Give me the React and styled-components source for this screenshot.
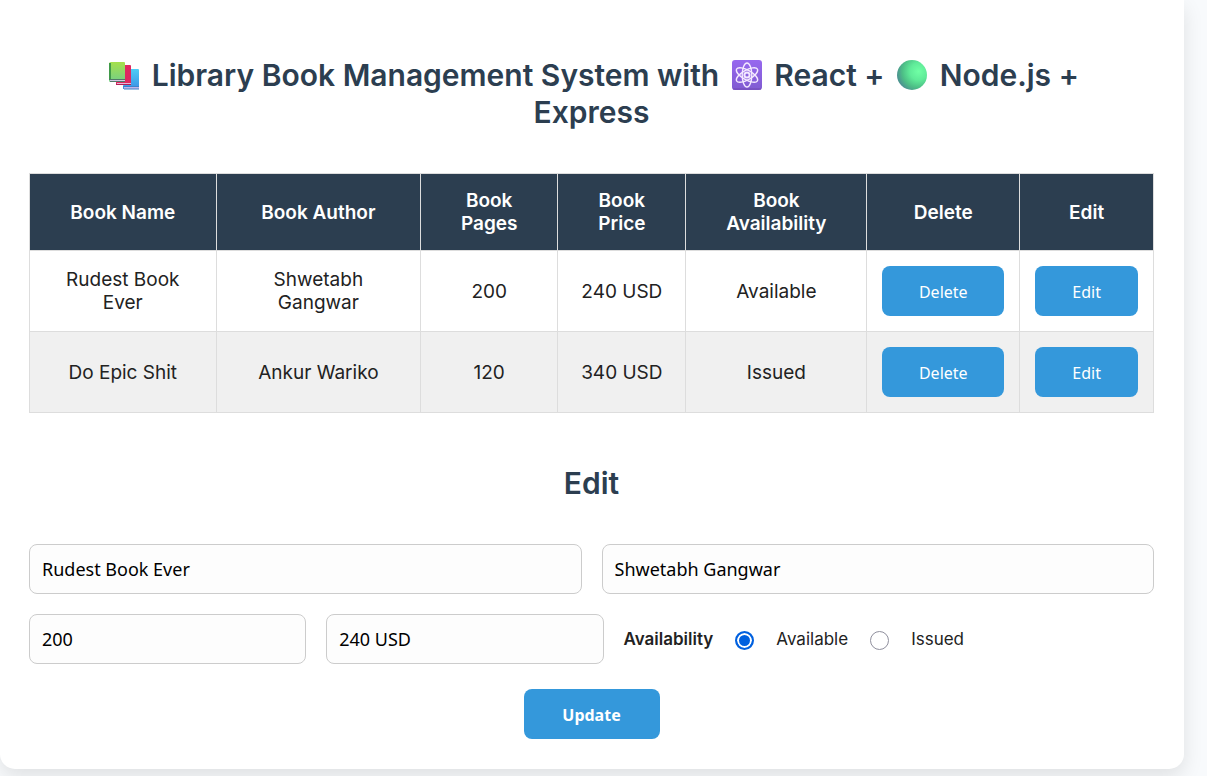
import React, { useState } from "react";
import styled, { createGlobalStyle } from "styled-components";

const GlobalStyle = createGlobalStyle`
  *, *::before, *::after { box-sizing: border-box; }
  body {
    margin: 0;
    background: #f8fafc;
    color: #222;
    font-family: Inter, "Liberation Sans", sans-serif;
    font-size: 17px;
  }
`;

const Card = styled.main`
  margin: 0 23px 7px 0;
  padding: 57px 30px 30px 29px;
  background: #fff;
  border-radius: 0 0 15px 15px;
  box-shadow: 0 8px 20px rgba(0, 0, 0, 0.1);
`;

const Title = styled.h1`
  margin: 0 0 42px;
  padding: 0 60px;
  color: #2c3e50;
  font-size: 30px;
  font-weight: 600;
  line-height: 37px;
  text-align: center;
`;

const SectionTitle = styled(Title).attrs({ as: "h2" })`
  margin-top: 52px;
`;

const Emoji = styled.svg`
  width: 32px;
  height: 32px;
  margin: 0 4px;
  vertical-align: -5px;
`;

const Table = styled.table`
  width: 100%;
  table-layout: fixed;
  border-collapse: collapse;
  font-size: 19px;
  line-height: 23px;
  text-align: center;
`;

const Col = styled.col`
  width: ${(p) => p.$share};
`;

const HeadCell = styled.th`
  padding: 15px 25px;
  border: 1px solid #ddd;
  background: #2c3e50;
  color: #fff;
  font-weight: 600;
`;

const Row = styled.tr`
  &:nth-child(even) { background: #f0f0f0; }
`;

const Cell = styled.td`
  padding: ${(p) => (p.$action ? "15px" : "15px 30px")};
  border: 1px solid #ddd;
`;

const Button = styled.button`
  display: block;
  width: ${(p) => p.$width || "100%"};
  height: 50px;
  margin: ${(p) => p.$margin || "0"};
  padding: 2px 0 0;
  border: 0;
  border-radius: 8px;
  background: #3498db;
  color: #fff;
  font-family: "Noto Sans", "Open Sans", sans-serif;
  font-size: 16px;
  font-weight: ${(p) => (p.$strong ? 700 : 400)};
  cursor: pointer;
`;

const FieldRow = styled.div`
  display: flex;
  align-items: center;
  gap: 20px;
  margin-top: 20px;
`;

const Input = styled.input`
  flex: ${(p) => (p.$small ? "0 0 calc(25% - 4px)" : "1 1 0")};
  min-width: 0;
  height: 50px;
  padding: 0 12px;
  border: 1px solid #ccc;
  border-radius: 8px;
  background: #fdfdfd;
  color: #000;
  font-family: "Noto Sans", "Open Sans", sans-serif;
  font-size: 18px;
`;

const Choices = styled.fieldset`
  display: flex;
  align-items: center;
  gap: 22px;
  min-width: 0;
  margin: 0;
  padding: 0;
  border: 0;
`;

const ChoiceTitle = styled.span`
  font-weight: 600;
`;

const Choice = styled.label`
  display: flex;
  align-items: center;
  gap: 22px;
`;

const Radio = styled.input`
  appearance: none;
  width: 19px;
  height: 19px;
  margin: 3px 0 0;
  border: 1px solid #8f8f9d;
  border-radius: 50%;
  background: #fff;
  &:checked {
    border: 2px solid #0060df;
    background: #0060df;
    box-shadow: inset 0 0 0 2px #fff;
  }
`;

const BooksIcon = () => (
  <Emoji viewBox="0 0 32 32" role="img" aria-label="Books">
    <defs>
      <linearGradient id="green" x1="0" y1="0" x2="0" y2="1">
        <stop stopColor="#a5e04c" />
        <stop offset="1" stopColor="#74cf86" />
      </linearGradient>
      <linearGradient id="blue" x1="0" y1="0" x2="0" y2="1">
        <stop stopColor="#4dcdf5" />
        <stop offset="1" stopColor="#3c91e5" />
      </linearGradient>
    </defs>
    <path d="M17 11q0-1 1-1h12q1 0 1 1v17l-1 2H15v-2z" fill="url(#blue)" />
    <path d="M16 28h15v2H16z" fill="#c2b5e8" />
    <path d="M15 27.5h16M16 30h15" stroke="#3d83cb" />
    <path d="M9 7q0-1 1-1h12q1 0 1 1v17l-1 2H8v-2z" fill="#df2860" />
    <path d="M9 24h14v1H9z" fill="#e4b7d7" />
    <path d="M8 25.5h15" stroke="#b31d55" />
    <path d="M1 5q0-2 2-2h13q1 0 1 1v17l-1 2H2q-1 0-1-2z" fill="url(#green)" />
    <path d="M2 4v17" stroke="#409a49" strokeWidth="2" />
    <path d="M2 21.5h15" stroke="#d1c7e4" strokeWidth="2" />
    <path d="M1 20.5h16M2 22.5h15" stroke="#52796a" />
  </Emoji>
);

const AtomIcon = () => (
  <Emoji viewBox="0 0 32 32" role="img" aria-label="Atom">
    <defs>
      <linearGradient id="violet" x1="0" y1="0" x2="0" y2="1">
        <stop stopColor="#9768ef" />
        <stop offset="1" stopColor="#805bd1" />
      </linearGradient>
    </defs>
    <rect x="1" y="1" width="30" height="30" rx="3" fill="url(#violet)" />
    <path d="M2 30h28" stroke="#7048b4" />
    <g fill="none" stroke="#f4e9ff" strokeWidth="1.4">
      <ellipse cx="16" cy="16" rx="4.8" ry="12" />
      <ellipse cx="16" cy="16" rx="4.8" ry="12" transform="rotate(60 16 16)" />
      <ellipse cx="16" cy="16" rx="4.8" ry="12" transform="rotate(120 16 16)" />
      <circle cx="16" cy="16" r="2.6" strokeWidth="2" />
    </g>
  </Emoji>
);

const CircleIcon = () => (
  <Emoji viewBox="0 0 32 32" role="img" aria-label="Green circle">
    <defs>
      <radialGradient id="ball" cx=".72" cy=".38" r=".72">
        <stop stopColor="#70ffa5" />
        <stop offset=".4" stopColor="#60eb99" />
        <stop offset=".75" stopColor="#4dbf86" />
        <stop offset="1" stopColor="#4c9490" />
      </radialGradient>
    </defs>
    <circle cx="16" cy="16" r="15" fill="url(#ball)" />
  </Emoji>
);

const columns = [
  ["Book Name", "16.6%"],
  ["Book Author", "18.2%"],
  ["Book Pages", "12.2%"],
  ["Book Price", "11.4%"],
  ["Book Availability", "16.1%"],
  ["Delete", "13.6%"],
  ["Edit", "11.9%"],
];

const books = [
  { name: "Rudest Book Ever", author: "Shwetabh Gangwar", pages: "200", price: "240 USD", status: "Available" },
  { name: "Do Epic Shit", author: "Ankur Wariko", pages: "120", price: "340 USD", status: "Issued" },
];

export default function App() {
  const [form, setForm] = useState(books[0]);
  const set = (key) => (e) => setForm({ ...form, [key]: e.target.value });

  return (
    <>
      <GlobalStyle />
      <Card>
        <Title>
          <BooksIcon /> Library Book Management System with <AtomIcon /> React + <CircleIcon /> Node.js + Express
        </Title>
        <Table>
          <colgroup>
            {columns.map(([label, share]) => <Col key={label} $share={share} />)}
          </colgroup>
          <thead>
            <tr>
              {columns.map(([label]) => <HeadCell key={label} scope="col">{label}</HeadCell>)}
            </tr>
          </thead>
          <tbody>
            {books.map((b) => (
              <Row key={b.name}>
                <Cell>{b.name}</Cell>
                <Cell>{b.author}</Cell>
                <Cell>{b.pages}</Cell>
                <Cell $action>{b.price}</Cell>
                <Cell>{b.status}</Cell>
                <Cell $action><Button type="button">Delete</Button></Cell>
                <Cell $action><Button type="button" onClick={() => setForm(b)}>Edit</Button></Cell>
              </Row>
            ))}
          </tbody>
        </Table>
        <SectionTitle>Edit</SectionTitle>
        <form onSubmit={(e) => e.preventDefault()}>
          <FieldRow>
            <Input aria-label="Book Name" value={form.name} onChange={set("name")} />
            <Input aria-label="Book Author" value={form.author} onChange={set("author")} />
          </FieldRow>
          <FieldRow>
            <Input $small aria-label="Book Pages" value={form.pages} onChange={set("pages")} />
            <Input $small aria-label="Book Price" value={form.price} onChange={set("price")} />
            <Choices aria-labelledby="availability">
              <ChoiceTitle id="availability">Availability</ChoiceTitle>
              {["Available", "Issued"].map((s) => (
                <Choice key={s}>
                  <Radio type="radio" name="status" value={s} checked={form.status === s} onChange={set("status")} />
                  {s}
                </Choice>
              ))}
            </Choices>
          </FieldRow>
          <Button type="submit" $strong $width="136px" $margin="25px auto 0">Update</Button>
        </form>
      </Card>
    </>
  );
}
